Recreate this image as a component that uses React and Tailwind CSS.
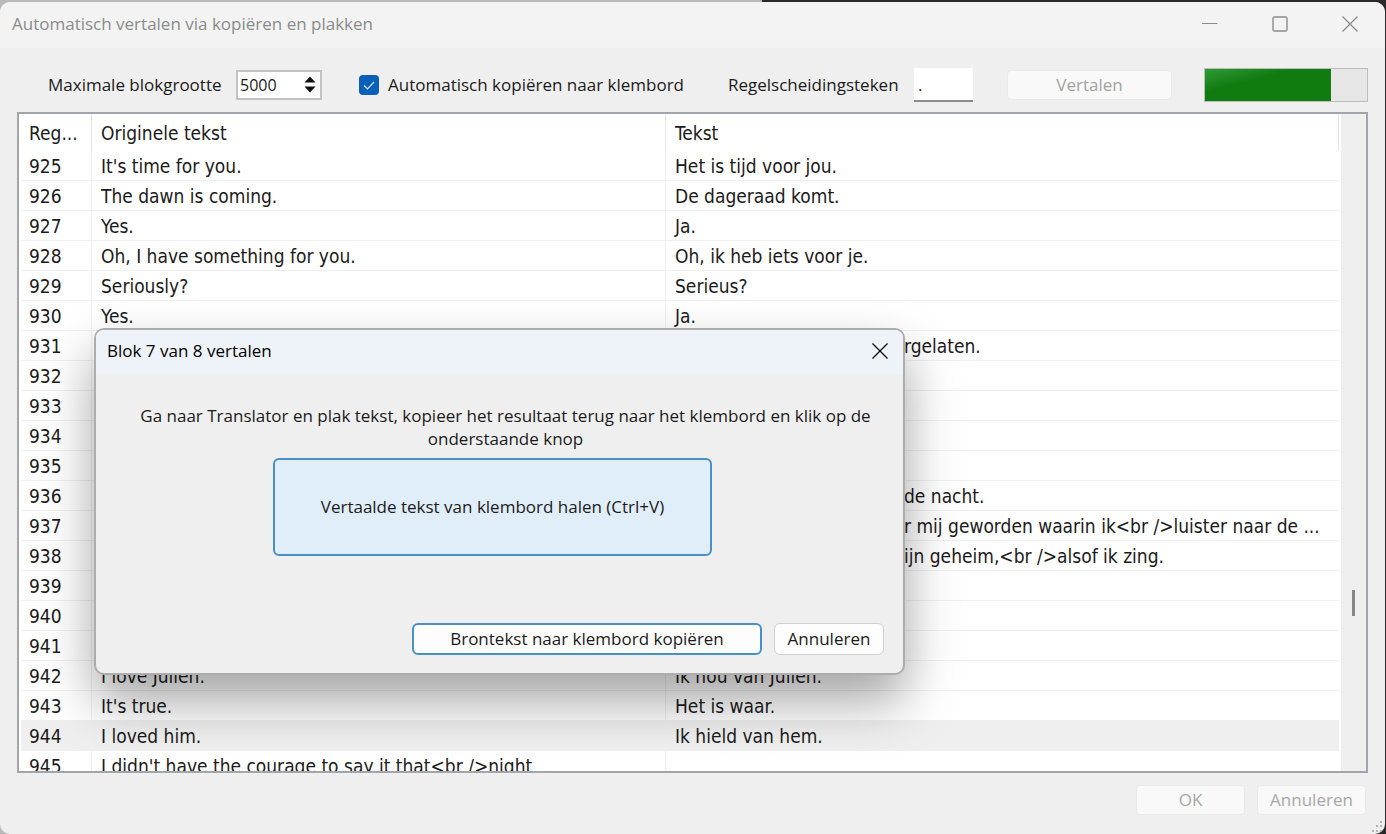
import React from 'react';

// Subtitle lines, "tail" marks translations that are mostly covered by the dialog
const rows = [
    { id: 925, original: "It's time for you.", text: 'Het is tijd voor jou.' },
    { id: 926, original: 'The dawn is coming.', text: 'De dageraad komt.' },
    { id: 927, original: 'Yes.', text: 'Ja.' },
    { id: 928, original: 'Oh, I have something for you.', text: 'Oh, ik heb iets voor je.' },
    { id: 929, original: 'Seriously?', text: 'Serieus?' },
    { id: 930, original: 'Yes.', text: 'Ja.' },
    { id: 931, original: '', text: 'rgelaten.', tail: true },
    { id: 932, original: '', text: '' },
    { id: 933, original: '', text: '' },
    { id: 934, original: '', text: '' },
    { id: 935, original: '', text: '' },
    { id: 936, original: '', text: 'de nacht.', tail: true },
    { id: 937, original: '', text: 'r mij geworden waarin ik<br />luister naar de ...', tail: true },
    { id: 938, original: '', text: 'ijn geheim,<br />alsof ik zing.', tail: true },
    { id: 939, original: '', text: '' },
    { id: 940, original: '', text: '' },
    { id: 941, original: '', text: '' },
    { id: 942, original: 'I love Julien.', text: 'Ik hou van Julien.' },
    { id: 943, original: "It's true.", text: 'Het is waar.' },
    { id: 944, original: 'I loved him.', text: 'Ik hield van hem.', selected: true },
    { id: 945, original: "I didn't have the courage to say it that<br />night", text: '' }
];

const CloseIcon = () => (
    <svg width="16" height="16" viewBox="0 0 16 16" fill="none" stroke="currentColor" strokeWidth="1.3">
        <path d="M0.5 0.5 L15.5 15.5 M15.5 0.5 L0.5 15.5" />
    </svg>
);

const TitleBar = () => (
    <header className="flex h-[46px] shrink-0 items-center justify-between bg-[#f3f3f3] pb-[2px] pl-3 text-[#8b8b8b]">
        <h1 className="text-[17px] leading-6">Automatisch vertalen via kopiëren en plakken</h1>
        <div className="flex items-center">
            <button type="button" aria-label="Minimaliseren" className="flex h-11 w-[70px] items-center justify-center">
                <svg width="16" height="16" viewBox="0 0 16 16" stroke="currentColor" strokeWidth="1">
                    <path d="M0 7.5 H15.5" />
                </svg>
            </button>
            <button type="button" aria-label="Maximaliseren" className="flex h-11 w-[70px] items-center justify-center">
                <svg width="16" height="16" viewBox="0 0 16 16" fill="none" stroke="currentColor" strokeWidth="1.4">
                    <rect x="1" y="1" width="14" height="14" rx="1.5" />
                </svg>
            </button>
            <button type="button" aria-label="Sluiten" className="flex h-11 w-[70px] items-center justify-center">
                <CloseIcon />
            </button>
        </div>
    </header>
);

const Toolbar = () => {
    const [blockSize, setBlockSize] = React.useState('5000');
    const [autoCopy, setAutoCopy] = React.useState(true);
    const [separator, setSeparator] = React.useState('.');

    return (
        <div className="flex h-16 shrink-0 items-center pr-[17px] pb-1 pt-[14px] pl-12 text-[17px] leading-6 whitespace-nowrap">
            <label htmlFor="block-size" className="w-[188px]">Maximale blokgrootte</label>
            <div className="flex h-[30px] w-[86px] items-center border-2 border-[#c2c2c2] bg-white pr-1 pl-[2px]">
                <input
                    id="block-size"
                    type="text"
                    inputMode="numeric"
                    value={blockSize}
                    onChange={(e) => setBlockSize(e.target.value)}
                    className="w-full min-w-0 bg-transparent text-[16px] outline-none"
                />
                <svg width="12" height="18" viewBox="0 0 12 18" className="shrink-0" fill="#111">
                    <path d="M6 0.5 L11.5 6.5 H0.5 Z M0.5 10.5 H11.5 L6 16.5 Z" />
                </svg>
            </div>
            <label htmlFor="auto-copy" className="ml-[37px] flex w-[369px] items-center gap-[9px]">
                <span className="relative flex h-5 w-5 shrink-0">
                    <input
                        id="auto-copy"
                        type="checkbox"
                        checked={autoCopy}
                        onChange={(e) => setAutoCopy(e.target.checked)}
                        className="h-5 w-5 appearance-none rounded bg-[#0a5fb8]"
                    />
                    {autoCopy && (
                        <svg viewBox="0 0 20 20" className="pointer-events-none absolute inset-0" fill="none" stroke="#cfe4f7" strokeWidth="1.2">
                            <path d="M5 10.5 L8.5 14 L15 7" />
                        </svg>
                    )}
                </span>
                Automatisch kopiëren naar klembord
            </label>
            <label htmlFor="separator" className="w-[186px]">Regelscheidingsteken</label>
            <input
                id="separator"
                type="text"
                value={separator}
                onChange={(e) => setSeparator(e.target.value)}
                className="h-[34px] w-[59px] border-b-2 border-[#8c8c8c] bg-white pl-1 outline-none"
            />
            <button type="button" disabled className="ml-[34px] h-[30px] w-[165px] rounded border border-[#e9e9e9] bg-[#f9f9f9] text-[#a3a3a3]">
                Vertalen
            </button>
            <div
                role="progressbar"
                aria-label="Voortgang"
                aria-valuenow={77}
                className="ml-8 h-[34px] flex-1 border border-[#bcbcbc] bg-[#e6e6e6]"
            >
                <div className="h-full bg-linear-to-br from-[#2f9a35] via-[#107c10] via-35% to-[#107c10]" style={{ width: '78%' }} />
            </div>
        </div>
    );
};

const LinesTable = () => (
    <div className="mx-[17px] flex min-h-0 flex-1 overflow-hidden border-2 border-[#a2a6ab] bg-white font-['DejaVu_Sans_Condensed','Noto_Sans',sans-serif] text-[19px] leading-6">
        <div className="min-w-0 flex-1 pl-[2px]">
            <table className="w-full table-fixed border-separate border-spacing-0 text-left whitespace-nowrap">
                <colgroup>
                    <col className="w-[71px]" />
                    <col className="w-[574px]" />
                    <col />
                </colgroup>
                <thead>
                    <tr className="h-[37px]">
                        <th className="border-r border-[#e5e5e5] pt-px pl-2 font-normal">Reg...</th>
                        <th className="border-r border-[#e5e5e5] pt-px pl-[9px] font-normal">Originele tekst</th>
                        <th className="border-r border-[#e5e5e5] pt-px pl-[9px] font-normal">Tekst</th>
                    </tr>
                </thead>
                <tbody>
                    {rows.map((row) => (
                        <tr key={row.id} className={row.selected ? 'h-[30px] bg-[#efefef]' : 'h-[30px]'}>
                            <td className="border-r border-b border-[#f0f0f0] pt-px pl-2">{row.id}</td>
                            <td className="border-r border-b border-[#f0f0f0] pt-px pl-[9px]">{row.original}</td>
                            <td className={row.tail ? 'border-b border-[#f0f0f0] pt-px pl-[238px]' : 'border-b border-[#f0f0f0] pt-px pl-[9px]'}>
                                {row.text}
                            </td>
                        </tr>
                    ))}
                </tbody>
            </table>
        </div>
        <div className="flex w-[27px] shrink-0 flex-col items-center border-l-2 border-white bg-[#efefef]">
            <div className="grow-[476]" />
            <div className="h-[26px] w-[3px] bg-[#868686]" />
            <div className="grow-[155]" />
        </div>
    </div>
);

const Footer = () => (
    <footer className="relative flex h-[61px] shrink-0 items-start justify-end gap-3 pt-3 pr-[19px] text-[17px] leading-6 text-[#a8a8a8]">
        <button type="button" disabled className="h-[30px] w-[109px] rounded border border-[#e9e9e9] bg-[#f9f9f9]">OK</button>
        <button type="button" disabled className="h-[30px] w-[109px] rounded border border-[#e9e9e9] bg-[#f9f9f9]">Annuleren</button>
        {/* resize grip */}
        <svg width="14" height="14" viewBox="0 0 14 14" className="absolute right-0 bottom-0" fill="#b5b5b5">
            <path d="M9 1h2v2h-2z M5 5h2v2h-2z M9 5h2v2h-2z M1 10h2v2h-2z M5 10h2v2h-2z M9 10h2v2h-2z" />
        </svg>
    </footer>
);

const BlockDialog = () => (
    <div
        role="dialog"
        aria-labelledby="dialog-title"
        className="absolute top-[328px] left-[94px] flex h-[347px] w-[811px] flex-col overflow-hidden rounded-[10px] border-2 border-[#adadb0] bg-[#efefef] shadow-[0_26px_52px_rgba(0,0,0,0.36)]"
    >
        <div className="flex h-11 shrink-0 items-center justify-between bg-[#eef3fa] pr-[15px] pb-[2px] pl-[11px]">
            <h2 id="dialog-title" className="text-[17px] leading-6 text-black">Blok 7 van 8 vertalen</h2>
            <button type="button" aria-label="Dialoog sluiten" className="text-black">
                <CloseIcon />
            </button>
        </div>
        <div className="flex flex-1 flex-col px-[19px] pt-[30px] pb-[18px] text-[17px]">
            <p className="pl-3 text-center leading-[23px] whitespace-nowrap">
                Ga naar Translator en plak tekst, kopieer het resultaat terug naar het klembord en klik op de
                <br />
                onderstaande knop
            </p>
            <button type="button" className="mt-2 ml-[158px] h-[98px] w-[439px] rounded-md border-2 border-[#4a90c8] bg-[#e0eef9]">
                Vertaalde tekst van klembord halen (Ctrl+V)
            </button>
            <div className="mt-auto flex justify-end gap-3">
                <button type="button" className="h-8 w-[350px] rounded-md border-2 border-[#4a90c8] bg-[#fdfdfd]">
                    Brontekst naar klembord kopiëren
                </button>
                <button type="button" className="h-8 w-[110px] rounded-md border border-[#d0d0d0] bg-[#fdfdfd]">
                    Annuleren
                </button>
            </div>
        </div>
    </div>
);

export default function App() {
    return (
        <div className="relative h-screen bg-linear-to-r from-[#b9b9b9] from-55% to-[#2b2929] to-55% pt-[2px] pr-px font-['Open_Sans','Noto_Sans',sans-serif] text-[#1c1a20]">
            <main className="flex h-full flex-col overflow-hidden rounded-[10px] bg-[#efefef]">
                <TitleBar />
                <Toolbar />
                <LinesTable />
                <Footer />
            </main>
            <BlockDialog />
        </div>
    );
}
